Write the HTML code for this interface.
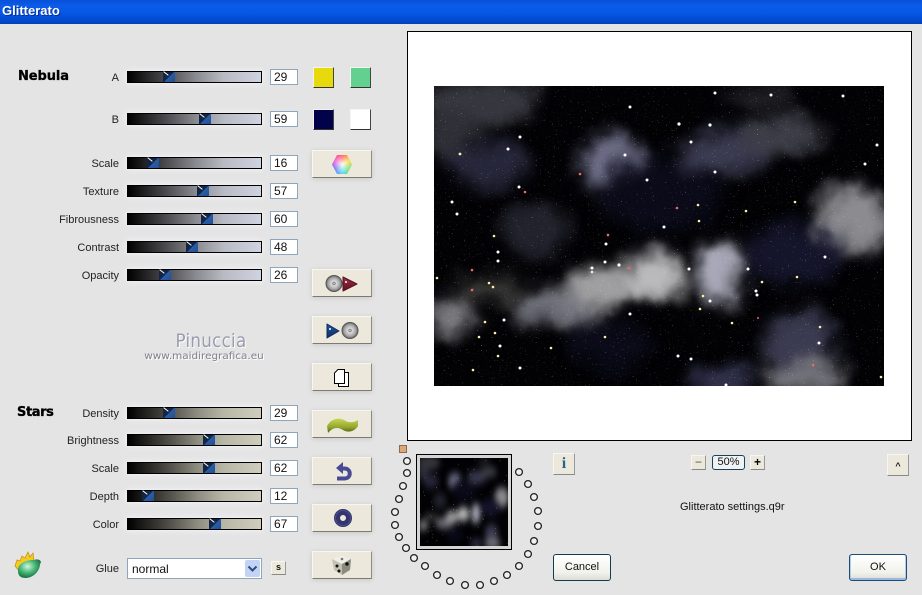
<!DOCTYPE html>
<html><head><meta charset="utf-8"><title>Glitterato</title>
<style>
html,body{margin:0;padding:0}
body{width:922px;height:595px;position:relative;overflow:hidden;background:#e4e4e5;font:11px "Liberation Sans",sans-serif;color:#111}
div{position:absolute;box-sizing:border-box}
.tb{left:0;top:0;width:922px;height:24px;background:linear-gradient(#0a50d8 0,#0a5cec 25%,#0757e4 55%,#0349cf 85%,#0240b8 100%)}
.ttl{left:2px;top:3px;font:bold 13px "Liberation Sans",sans-serif;color:#fff;text-shadow:1px 1px 0 #03309a}
.l{left:20px;width:99px;text-align:right;white-space:nowrap;height:14px;line-height:14px;font-size:11px;color:#222;margin-top:1px}
.s{left:127px;width:135px;height:12px;border:1px solid #000;box-shadow:0 0 7px rgba(255,255,255,.8)}
.n{background:linear-gradient(90deg,#000 0,#4a4a4d 28%,#8c8d93 52%,#b8bac4 72%,#d0d3e0 100%)}
.t{background:linear-gradient(90deg,#000 0,#474640 28%,#8d8c80 52%,#b8b7a6 72%,#cfceBe 100%)}
.h{top:-1px;width:12px;height:10px;background:linear-gradient(135deg,#16233c 0,#12264a 48%,#2a5ca8 52%,#23508f 100%)}
.h:after{content:"";position:absolute;left:0;top:1px;width:6px;height:1px;background:#fff;transform:rotate(38deg)}
.i{left:270px;width:28px;height:16px;background:#fff;border:1px solid #8ea6bb;font-size:12px;line-height:15px;padding-left:3px;color:#111}
.b{left:312px;width:60px;height:28px;background:#ece9dc;border:1px solid;border-color:#f7f6f0 #8f8d80 #7d7b70 #f7f6f0;box-shadow:0 1px 5px rgba(0,0,0,.12)}
.sw{width:21px;height:21px;border:1px solid;border-color:#f5f5f0 #444 #333 #f5f5f0}
.small{background:#ece9dc;border:1px solid;border-color:#f7f6f0 #999 #888 #f7f6f0}
.h1{font:bold 13px "DejaVu Sans",sans-serif;color:#000;white-space:nowrap;-webkit-text-stroke:.3px #000}
svg{position:absolute;overflow:visible}
.db{background:linear-gradient(#fff,#f2f2ec 70%,#dcdcd4);border:1px solid #133c54;border-radius:3px;text-align:center;line-height:25px;font-size:11px;color:#111}
</style></head><body>
<div class="tb"></div><div class="ttl">Glitterato</div>

<div class="h1" style="left:18px;top:69px;letter-spacing:-.1px">Nebula</div>
<div class="h1" style="left:17px;top:405px;letter-spacing:-.4px">Stars</div>

<div class="l" style="top:70px">A</div><div class="s n" style="top:71px"><div class="h" style="left:35px;top:0"></div></div><div class="i" style="top:69px">29</div>
<div class="l" style="top:112px">B</div><div class="s n" style="top:113px"><div class="h" style="left:71px;top:0"></div></div><div class="i" style="top:111px">59</div>
<div class="l" style="top:156px">Scale</div><div class="s n" style="top:157px"><div class="h" style="left:19px;top:0"></div></div><div class="i" style="top:155px">16</div>
<div class="l" style="top:184px">Texture</div><div class="s n" style="top:185px"><div class="h" style="left:69px;top:0"></div></div><div class="i" style="top:183px">57</div>
<div class="l" style="top:212px">Fibrousness</div><div class="s n" style="top:213px"><div class="h" style="left:73px;top:0"></div></div><div class="i" style="top:211px">60</div>
<div class="l" style="top:240px">Contrast</div><div class="s n" style="top:241px"><div class="h" style="left:58px;top:0"></div></div><div class="i" style="top:239px">48</div>
<div class="l" style="top:268px">Opacity</div><div class="s n" style="top:269px"><div class="h" style="left:31px;top:0"></div></div><div class="i" style="top:267px">26</div>

<div class="l" style="top:406px">Density</div><div class="s t" style="top:407px"><div class="h" style="left:35px;top:0"></div></div><div class="i" style="top:405px">29</div>
<div class="l" style="top:433px">Brightness</div><div class="s t" style="top:434px"><div class="h" style="left:75px;top:0"></div></div><div class="i" style="top:432px">62</div>
<div class="l" style="top:461px">Scale</div><div class="s t" style="top:462px"><div class="h" style="left:75px;top:0"></div></div><div class="i" style="top:460px">62</div>
<div class="l" style="top:489px">Depth</div><div class="s t" style="top:490px"><div class="h" style="left:14px;top:0"></div></div><div class="i" style="top:488px">12</div>
<div class="l" style="top:517px">Color</div><div class="s t" style="top:518px"><div class="h" style="left:81px;top:0"></div></div><div class="i" style="top:516px">67</div>

<div class="l" style="top:561px">Glue</div>
<div style="left:127px;top:558px;width:135px;height:21px;background:#fff;border:1px solid #8ea6bb;font-size:12px;line-height:20px;padding-left:4px;color:#111">normal
<div style="left:117px;top:1px;width:15px;height:17px;background:#c3d3f3;border-radius:2px"></div>
<svg style="left:119px;top:6px" width="11" height="8"><path d="M1.500 1.500L5.500 5.500L9.500 1.500" fill="none" stroke="#2c4a82" stroke-width="2"/></svg></div>
<div class="small" style="left:271px;top:561px;width:15px;height:14px;font:bold 9px 'Liberation Sans',sans-serif;line-height:11px;text-align:center">s</div>

<div class="sw" style="left:313px;top:67px;background:#e6d90c"></div>
<div class="sw" style="left:350px;top:67px;background:#62d08e"></div>
<div class="sw" style="left:313px;top:109px;background:#02024a"></div>
<div class="sw" style="left:350px;top:109px;background:#fff"></div>

<div class="b" style="top:150px"><div style="left:19px;top:4px;width:20px;height:19px;clip-path:polygon(25% 0,75% 0,100% 50%,75% 100%,25% 100%,0 50%);background:radial-gradient(circle,rgba(255,255,255,.95) 0,rgba(255,255,255,.1) 70%),conic-gradient(#ff5050,#ffd030,#60e060,#40d0f0,#6060f0,#f040d0,#ff5050)"></div></div>

<div class="b" style="top:269px"><svg width="60" height="28">
<defs><radialGradient id="cd"><stop offset="0" stop-color="#eee"/><stop offset=".16" stop-color="#777"/><stop offset=".26" stop-color="#ddd"/><stop offset=".7" stop-color="#a8a8a8"/><stop offset="1" stop-color="#6a6a6a"/></radialGradient>
<linearGradient id="rt" x1="0" y1="0" x2="0" y2="1"><stop offset="0" stop-color="#a03048"/><stop offset="1" stop-color="#5a1020"/></linearGradient>
<linearGradient id="bt" x1="0" y1="0" x2="0" y2="1"><stop offset="0" stop-color="#2456a0"/><stop offset="1" stop-color="#0e2c60"/></linearGradient></defs>
<circle cx="21" cy="13.500" r="8" fill="url(#cd)" stroke="#555"/><path d="M30 7L44 14L30 21Z" fill="url(#rt)" stroke="#5a1020" stroke-linejoin="round"/><circle cx="33" cy="12" r="1" fill="#fff"/></svg></div>
<div class="b" style="top:316px"><svg width="60" height="28"><path d="M14 7L26 14L14 21Z" fill="url(#bt)" stroke="#0e2c60" stroke-linejoin="round"/><circle cx="17" cy="12" r="1" fill="#fff"/><circle cx="37" cy="13.500" r="8" fill="url(#cd)" stroke="#555"/></svg></div>
<div class="b" style="top:363px"><svg width="60" height="28"><path d="M31.500 8.500H35.500V22.500H25.500V19" fill="#fff" stroke="#000"/><path d="M21.500 9L25 5.500H31.500V19.500H21.500Z" fill="#fff" stroke="#000"/></svg></div>
<div class="b" style="top:410px"><svg width="60" height="28"><defs><linearGradient id="w" x1="0" y1="0" x2="0" y2="1"><stop offset="0" stop-color="#c8d650"/><stop offset=".6" stop-color="#93a62e"/><stop offset="1" stop-color="#4e5e12"/></linearGradient></defs><path d="M14 15C18 8 25 6 31 9C36 12 40 12 45 9L45 15C41 21 35 22 30 19C25 16 20 16 15 22Z" fill="url(#w)"/></svg></div>
<div class="b" style="top:457px"><svg width="60" height="28"><path d="M28 10.500H31.500C38.500 10.500 38.500 20.500 31.500 20.500H24" fill="none" stroke="#4a4a94" stroke-width="4"/><path d="M30 4V16L23 10Z" fill="#4a4a94"/></svg></div>
<div class="b" style="top:504px"><svg width="60" height="28"><circle cx="30" cy="13" r="6" fill="none" stroke="#34346e" stroke-width="6"/><circle cx="30" cy="13" r="7.500" fill="none" stroke="#5a5a9a" stroke-width="1" opacity=".7"/></svg></div>
<div class="b" style="top:551px"><svg width="60" height="28"><path d="M19 7L29 3L38 7L37 18L29 23L21 18Z" fill="#c2c2b4"/><path d="M19 7L29 3L38 7L29 12Z" fill="#f0efe6"/><path d="M29 12L38 7L37 18L29 23Z" fill="#8c8c7e"/><circle cx="24" cy="14" r="1.500" fill="#111"/><circle cx="26" cy="19" r="1.500" fill="#111"/><circle cx="34" cy="12" r="1.700" fill="#111"/><circle cx="29" cy="7" r="1.300" fill="#777"/></svg></div>

<div style="left:126px;top:330px;width:170px;text-align:center;font:19px 'DejaVu Sans',sans-serif;color:#9a9cae;text-shadow:1px 1px 0 #fff;letter-spacing:.3px;transform:scaleX(.88)">Pinuccia</div>
<div style="left:109px;top:351px;width:190px;text-align:center;font:10px 'DejaVu Sans',sans-serif;color:#7e808e;text-shadow:1px 1px 0 #fff;transform:scaleX(1.04);white-space:nowrap">www.maidiregrafica.eu</div>

<svg style="left:12px;top:550px" width="32" height="32">
<defs><radialGradient id="pear" cx=".42" cy=".38" r=".7"><stop offset="0" stop-color="#d8f4dc"/><stop offset=".45" stop-color="#4cbc7c"/><stop offset="1" stop-color="#0c5c30"/></radialGradient></defs>
<path d="M3 16L5 10L8 11L10 6L13 8L16 2L18 7L21 3L22 11L8 22Z" fill="#f4cc20" stroke="#c88a10" stroke-width=".7"/>
<path d="M6 21C5 14 13 10 22 10C26 8 31 11 28 14C28 21 21 28 14 28C9 28 6 26 6 21Z" fill="url(#pear)"/>
</svg>

<!-- preview -->
<div style="left:407px;top:31px;width:505px;height:410px;background:#fff;border:1px solid #000"></div>
<svg style="left:0;top:0" width="922" height="595" viewBox="0 0 922 595">
<defs>
<filter id="neb" x="-5%" y="-5%" width="110%" height="110%" color-interpolation-filters="sRGB">
<feGaussianBlur stdDeviation="8" result="b"/>
<feTurbulence type="fractalNoise" baseFrequency=".03" numOctaves="4" seed="7" result="t"/>
<feDisplacementMap in="b" in2="t" scale="26" xChannelSelector="R" yChannelSelector="G"/>
<feGaussianBlur stdDeviation="1.200"/>
</filter>
<filter id="tb" x="-5%" y="-5%" width="110%" height="110%" color-interpolation-filters="sRGB">
<feGaussianBlur stdDeviation="14"/>
</filter>
<filter id="dots" x="0" y="0" width="1" height="1" color-interpolation-filters="sRGB">
<feTurbulence type="fractalNoise" baseFrequency=".75" numOctaves="1" seed="11"/>
<feColorMatrix values="0 0 0 0 1 0 0 0 0 1 0 0 0 0 1 9 0 0 0 -6.300"/>
</filter>
<clipPath id="cp"><rect x="434" y="86" width="450" height="300"/></clipPath>
<g id="ell">
<ellipse cx="480" cy="102" rx="58" ry="24" fill="#36363e"/>
<ellipse cx="450" cy="135" rx="26" ry="24" fill="#2e2e36"/>
<ellipse cx="490" cy="165" rx="40" ry="24" fill="#26263a"/>
<ellipse cx="612" cy="165" rx="34" ry="28" fill="#6c6c86"/>
<ellipse cx="660" cy="195" rx="60" ry="36" fill="#0a0a18"/>
<ellipse cx="725" cy="152" rx="48" ry="22" fill="#3a3a50"/>
<ellipse cx="785" cy="134" rx="42" ry="18" fill="#3e3e48"/>
<ellipse cx="760" cy="98" rx="34" ry="9" fill="#26262c"/>
<ellipse cx="852" cy="220" rx="36" ry="34" fill="#8c8c90"/>
<ellipse cx="795" cy="255" rx="50" ry="30" fill="#14142a"/>
<ellipse cx="535" cy="232" rx="34" ry="26" fill="#22222c"/>
<ellipse cx="558" cy="308" rx="46" ry="18" fill="#70707a"/>
<ellipse cx="600" cy="287" rx="36" ry="20" fill="#a0a0a2"/>
<ellipse cx="656" cy="277" rx="30" ry="24" fill="#bababc"/>
<ellipse cx="720" cy="275" rx="22" ry="34" fill="#a8a8b8"/>
<ellipse cx="450" cy="316" rx="26" ry="17" fill="#7c7c80"/>
<ellipse cx="490" cy="288" rx="36" ry="12" fill="#3a3a38"/>
<ellipse cx="800" cy="342" rx="34" ry="30" fill="#3a3a50"/>
<ellipse cx="805" cy="378" rx="42" ry="18" fill="#72727a"/>
<ellipse cx="722" cy="378" rx="32" ry="14" fill="#343450"/>
<ellipse cx="610" cy="345" rx="40" ry="24" fill="#0a0a18"/>
</g>
<g id="st">
<g fill="#fff">
<circle cx="715" cy="93" r="1.500"/><circle cx="771" cy="95" r="1.500"/><circle cx="843" cy="96" r="1.500"/><circle cx="630" cy="107" r="1.500"/><circle cx="679" cy="124" r="1.600"/><circle cx="710" cy="125" r="1.600"/><circle cx="520" cy="137" r="1.500"/><circle cx="508" cy="149" r="1.500"/><circle cx="691" cy="142" r="1.500"/><circle cx="877" cy="145" r="1.500"/><circle cx="625" cy="155" r="1.500"/><circle cx="865" cy="164" r="1.500"/><circle cx="715" cy="172" r="1.500"/><circle cx="647" cy="180" r="1.500"/><circle cx="519" cy="187" r="1.500"/><circle cx="452" cy="202" r="1.500"/><circle cx="457" cy="214" r="1.500"/><circle cx="664" cy="227" r="1.500"/>
<circle cx="606" cy="244" r="1.500"/><circle cx="498" cy="252" r="1.500"/><circle cx="498" cy="261" r="1.500"/><circle cx="605" cy="262" r="1.500"/><circle cx="619" cy="265" r="1.600"/><circle cx="592" cy="268" r="1.500"/><circle cx="689" cy="269" r="1.500"/><circle cx="710" cy="301" r="1.500"/><circle cx="748" cy="269" r="1.500"/><circle cx="756" cy="291" r="1.500"/><circle cx="757" cy="295" r="1.500"/><circle cx="825" cy="257" r="1.500"/><circle cx="630" cy="314" r="1.500"/><circle cx="504" cy="320" r="1.500"/><circle cx="500" cy="346" r="1.500"/><circle cx="819" cy="343" r="1.500"/><circle cx="678" cy="356" r="1.500"/><circle cx="691" cy="359" r="1.500"/><circle cx="520" cy="368" r="1.500"/><circle cx="726" cy="385" r="1.500"/>
</g>
<g fill="#ffefa8">
<circle cx="460" cy="154" r="1.400"/><circle cx="698" cy="205" r="1.300"/><circle cx="746" cy="211" r="1.300"/><circle cx="795" cy="202" r="1.300"/><circle cx="699" cy="221" r="1.300"/><circle cx="494" cy="236" r="1.300"/><circle cx="592" cy="272" r="1.300"/><circle cx="437" cy="278" r="1.300"/><circle cx="489" cy="283" r="1.300"/><circle cx="493" cy="287" r="1.300"/><circle cx="703" cy="296" r="1.300"/><circle cx="700" cy="309" r="1.300"/><circle cx="762" cy="282" r="1.300"/><circle cx="485" cy="322" r="1.300"/><circle cx="495" cy="333" r="1.300"/><circle cx="479" cy="337" r="1.300"/><circle cx="498" cy="356" r="1.300"/><circle cx="551" cy="348" r="1.300"/><circle cx="732" cy="323" r="1.300"/><circle cx="820" cy="327" r="1.300"/><circle cx="473" cy="370" r="1.300"/><circle cx="881" cy="377" r="1.300"/><circle cx="797" cy="277" r="1.300"/><circle cx="605" cy="337" r="1.300"/>
</g>
<g fill="#f06868">
<circle cx="580" cy="174" r="1.300"/><circle cx="525" cy="192" r="1.300"/><circle cx="677" cy="208" r="1.300"/><circle cx="608" cy="235" r="1.300"/><circle cx="629" cy="268" r="1.300"/><circle cx="472" cy="270" r="1.300"/><circle cx="472" cy="290" r="1.300"/><circle cx="813" cy="365" r="1.300"/><circle cx="758" cy="318" r="1"/>
</g>
</g>
</defs>
<g clip-path="url(#cp)">
<rect x="434" y="86" width="450" height="300" fill="#020205"/>
<g filter="url(#neb)"><use href="#ell"/></g>
<rect x="434" y="86" width="450" height="300" filter="url(#dots)" opacity=".45"/>
<use href="#st"/>
</g>
<rect x="416.500" y="454.500" width="95" height="95" fill="#d4d4d4" stroke="#000"/>
<svg x="420" y="458" width="88" height="88" viewBox="434 86 450 300" preserveAspectRatio="none" style="overflow:hidden"><rect x="434" y="86" width="450" height="300" fill="#020205"/><g filter="url(#tb)"><use href="#ell"/></g><use href="#st" opacity=".6"/></svg>

<g fill="#f0f0f0" stroke="#222" stroke-width="1.300">
<circle cx="407" cy="461" r="3.400"/><circle cx="407" cy="473" r="3.400"/><circle cx="403" cy="486" r="3.400"/><circle cx="399" cy="499" r="3.400"/><circle cx="395" cy="512" r="3.400"/><circle cx="395" cy="525" r="3.400"/><circle cx="399" cy="537" r="3.400"/><circle cx="406" cy="548" r="3.400"/><circle cx="414" cy="558" r="3.400"/><circle cx="425" cy="566" r="3.400"/><circle cx="437" cy="575" r="3.400"/><circle cx="450" cy="581" r="3.400"/><circle cx="465" cy="585" r="3.400"/><circle cx="480" cy="585" r="3.400"/><circle cx="494" cy="581" r="3.400"/><circle cx="507" cy="575" r="3.400"/><circle cx="519" cy="566" r="3.400"/><circle cx="528" cy="554" r="3.400"/><circle cx="534" cy="541" r="3.400"/><circle cx="538" cy="526" r="3.400"/><circle cx="538" cy="511" r="3.400"/><circle cx="534" cy="497" r="3.400"/><circle cx="528" cy="484" r="3.400"/><circle cx="519" cy="472" r="3.400"/>
</g>
<rect x="399.500" y="445.500" width="7" height="7" fill="#dca878" stroke="#8a6a50"/>
</svg>

<div class="small" style="left:553px;top:453px;width:22px;height:22px"><div style="left:0;top:0;width:20px;text-align:center;font:bold 16px 'Liberation Serif',serif;color:#2c6486;line-height:20px">i</div></div>
<div class="small" style="left:691px;top:455px;width:15px;height:15px;color:#888;text-align:center;font:bold 12px/12px 'Liberation Sans',sans-serif">−</div>
<div style="left:712px;top:455px;width:33px;height:15px;background:#f0f3f4;border:1px solid #1c4058;border-radius:3px;text-align:center;font-size:11px;line-height:13px;color:#111">50%</div>
<div class="small" style="left:750px;top:455px;width:15px;height:15px;color:#000;text-align:center;font:bold 12px/12px 'Liberation Sans',sans-serif">+</div>
<div class="small" style="left:887px;top:454px;width:22px;height:22px;text-align:center;font:bold 9px/22px 'Liberation Sans',sans-serif">^</div>
<div style="left:680px;top:500px;font-size:11px;line-height:14px;white-space:nowrap;color:#111">Glitterato settings.q9r</div>
<div class="db" style="left:553px;top:554px;width:58px;height:27px">Cancel</div>
<div class="db" style="left:849px;top:554px;width:58px;height:27px;border-color:#1c4c78;box-shadow:inset 0 -2px 0 #9ab8e0,inset 1px 0 0 #b4cce8,inset -1px 0 0 #b4cce8">OK</div>
</body></html>
